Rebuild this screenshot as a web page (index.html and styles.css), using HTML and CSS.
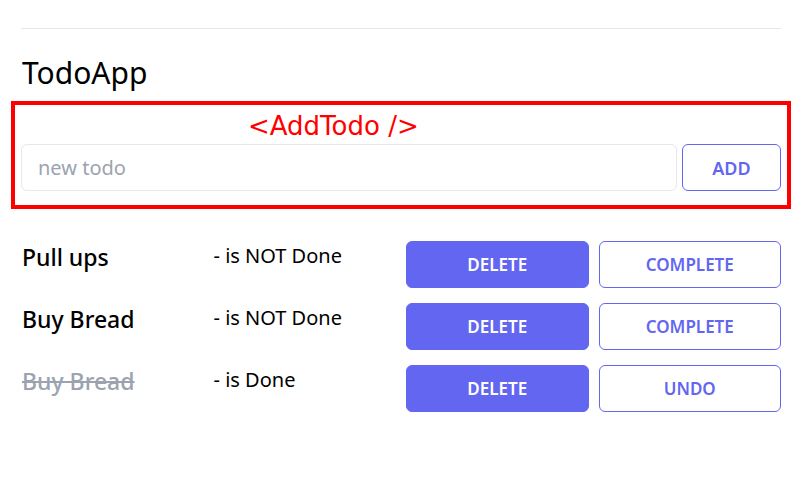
FILE: index.html
```html
<!DOCTYPE html>
<html>
<head>
<meta charset="utf-8">
<link rel="stylesheet" href="styles.css">
</head>
<body>
<div class="app">
  <hr class="rule">
  <h1 class="title">TodoApp</h1>
  <div class="add-box">
    <div class="add-label">&lt;AddTodo /&gt;</div>
    <div class="add-row">
      <input class="add-input" type="text" placeholder="new todo">
      <button class="btn btn-outline add-btn">ADD</button>
    </div>
  </div>
  <div class="list">
    <div class="todo">
      <div class="todo-name">Pull ups</div>
      <div class="todo-status">- is NOT Done</div>
      <button class="btn btn-solid">DELETE</button>
      <button class="btn btn-outline">COMPLETE</button>
    </div>
    <div class="todo">
      <div class="todo-name">Buy Bread</div>
      <div class="todo-status">- is NOT Done</div>
      <button class="btn btn-solid">DELETE</button>
      <button class="btn btn-outline">COMPLETE</button>
    </div>
    <div class="todo">
      <div class="todo-name done">Buy Bread</div>
      <div class="todo-status">- is Done</div>
      <button class="btn btn-solid">DELETE</button>
      <button class="btn btn-outline">UNDO</button>
    </div>
  </div>
</div>
</body>
</html>
```
FILE: styles.css
```css
html, body {
  margin: 0;
  padding: 0;
  background: #fff;
}
body {
  font-family: "Noto Sans", sans-serif;
  color: #000;
}
.app {
  padding: 28px 21px 0 21px;
}
.rule {
  margin: 0;
  border: 0;
  border-top: 1px solid #e5e7eb;
}
.title {
  margin: 24px 1px 8px;
  font-size: 30px;
  font-weight: 400;
  line-height: 40px;
}
.add-box {
  margin: 0 -10px;
  border: 4px solid #ff0000;
  padding: 5px 6px 14px;
}
.add-label {
  color: #ff0000;
  font-family: "DejaVu Sans", sans-serif;
  font-size: 26px;
  line-height: 32px;
  padding-left: 227px;
  margin-bottom: 2px;
}
.add-row {
  display: flex;
  gap: 5px;
}
.add-input {
  flex: 1;
  height: 47px;
  box-sizing: border-box;
  border: 1px solid #e5e7eb;
  border-radius: 6px;
  padding: 0 16px;
  font-family: "Noto Sans", sans-serif;
  font-size: 20px;
  color: #111;
  outline: none;
}
.add-input::placeholder {
  color: #9ca3af;
}
.btn {
  height: 47px;
  box-sizing: border-box;
  border-radius: 6px;
  font-family: "Noto Sans", sans-serif;
  font-size: 17px;
  font-weight: 600;
  padding: 0;
  cursor: pointer;
}
.btn-outline {
  background: #fff;
  border: 1px solid #6366f1;
  color: #6366f1;
}
.btn-solid {
  background: #6366f1;
  border: 1px solid #6366f1;
  color: #fff;
}
.add-btn {
  width: 99px;
  font-size: 18px;
}
.list {
  margin-top: 32px;
  display: flex;
  flex-direction: column;
  gap: 15px;
}
.todo {
  display: grid;
  grid-template-columns: repeat(4, 1fr);
  gap: 10px;
  align-items: start;
}
.todo-name {
  font-size: 23px;
  font-weight: 500;
  line-height: 32px;
  padding-left: 1px;
}
.todo-name.done {
  color: #9ca3af;
  text-decoration: line-through;
}
.todo-status {
  font-size: 20px;
  line-height: 28px;
  padding-top: 1px;
}
```
